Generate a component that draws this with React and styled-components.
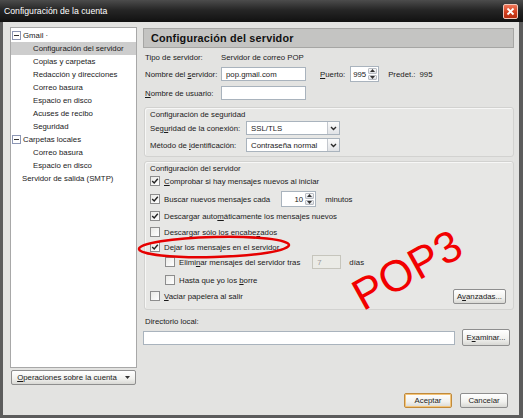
import React from 'react';
import styled, { createGlobalStyle } from 'styled-components';

const GlobalStyle = createGlobalStyle`
  html, body { margin: 0; padding: 0; background: #e3e3e1; }
  body {
    font-family: "Liberation Sans", Arial, sans-serif;
    font-size: 7.8px;
    color: #1a1a1a;
  }
  u { text-decoration: underline; text-underline-offset: 1px; }
`;

const Window = styled.div`
  position: relative;
  width: 523px;
  height: 418px;
  display: flex;
  flex-direction: column;
  overflow: hidden;
`;

const TitleBar = styled.div`
  height: 22px;
  flex: none;
  display: flex;
  align-items: center;
  justify-content: space-between;
  padding: 0 5px 0 4px;
  background: linear-gradient(#4c4c4c, #262626 45%, #111 100%);
  color: #fff;
  font-size: 8.7px;
`;

const CloseButton = styled.div`
  width: 15px;
  height: 15px;
  box-sizing: border-box;
  border: 1px solid #f3c6b8;
  border-radius: 2px;
  background: linear-gradient(#f0775a, #d4401f 55%, #b52c10);
  display: flex;
  align-items: center;
  justify-content: center;
`;

const Frame = styled.div`
  flex: 1;
  display: flex;
  background: #e3e3e1;
  border-left: 3px solid #5c5c5c;
  border-right: 4px solid #5c5c5c;
  border-bottom: 3px solid #5c5c5c;
  padding: 5px 5px 0 7px;
`;

const LeftColumn = styled.div`
  width: 127px;
  flex: none;
  display: flex;
  flex-direction: column;
  gap: 2px;
`;

const Tree = styled.div`
  height: 341px;
  box-sizing: border-box;
  background: #fff;
  border: 1px solid #a8a8a8;
  padding-top: 1px;
`;

const TreeItem = styled.div`
  height: 13px;
  display: flex;
  align-items: center;
  gap: 2px;
  padding-left: ${p => p.$indent}px;
  background: ${p => (p.$selected ? '#cdcdcd' : 'transparent')};
  white-space: nowrap;
`;

const Expander = styled.span`
  width: 7px;
  height: 7px;
  border: 1px solid #8c96b4;
  background: #fff;
  display: flex;
  align-items: center;
  justify-content: center;
  &::after {
    content: '';
    width: 5px;
    height: 1px;
    background: #333;
  }
`;

const Button = styled.div`
  box-sizing: border-box;
  height: ${p => p.$h || 15}px;
  width: ${p => p.$w}px;
  margin-right: ${p => p.$mr || 0}px;
  flex: none;
  display: flex;
  align-items: center;
  justify-content: center;
  gap: 8px;
  border: 1px solid ${p => (p.$default ? '#c08a3c' : '#8e8e8e')};
  border-radius: 2px;
  background: linear-gradient(#ffffff, #f1f1ee 60%, #d8d8d4);
  box-shadow: ${p => (p.$default ? 'inset 0 0 0 1px #f4c477' : 'none')};
  white-space: nowrap;
`;

const SideButton = styled(Button)`
  margin-left: 1px;
`;

const RightColumn = styled.div`
  width: 371px;
  margin-left: 6px;
  display: flex;
  flex-direction: column;
`;

const Header = styled.div`
  height: 20px;
  margin-top: 1px;
  box-sizing: border-box;
  display: flex;
  align-items: center;
  padding-left: 7px;
  background: #c4c4c2;
  border: 1px solid #a6a6a4;
  font-size: 10.8px;
  font-weight: bold;
  letter-spacing: 0.2px;
  color: #111;
`;

const Row = styled.div`
  height: ${p => p.$h}px;
  margin-top: ${p => p.$mt || 0}px;
  flex: none;
  display: flex;
  align-items: center;
  padding-left: ${p => p.$pl || 0}px;
  white-space: nowrap;
`;

const Label = styled.span`
  width: ${p => p.$w}px;
  flex: none;
`;

const Text = styled.span`
  margin-left: ${p => p.$ml || 0}px;
`;

const TextInput = styled.div`
  box-sizing: border-box;
  width: ${p => p.$w}px;
  height: ${p => p.$h || 14}px;
  margin-left: ${p => p.$ml || 0}px;
  flex: none;
  display: flex;
  align-items: center;
  padding: 0 4px;
  background: ${p => (p.$disabled ? '#ebebe6' : '#fff')};
  color: ${p => (p.$disabled ? '#9a9a9a' : 'inherit')};
  border: 1px solid ${p => (p.$disabled ? '#c6c5bc' : '#a9b3bd')};
`;

const SpinBox = styled.div`
  box-sizing: border-box;
  width: ${p => p.$w}px;
  height: 16px;
  margin-left: ${p => p.$ml || 0}px;
  flex: none;
  display: flex;
  background: #fff;
  border: 1px solid #a9b3bd;
`;

const SpinValue = styled.span`
  flex: 1;
  display: flex;
  align-items: center;
  justify-content: flex-end;
  padding-right: 1px;
`;

const SpinArrows = styled.div`
  width: 9px;
  display: flex;
  flex-direction: column;
  gap: 1px;
  padding: 1px;
`;

const SpinArrow = styled.div`
  flex: 1;
  border: 1px solid #b9bdc4;
  border-radius: 1px;
  background: linear-gradient(#fafafa, #dcdfe4);
  display: flex;
  align-items: center;
  justify-content: center;
`;

const Select = styled.div`
  box-sizing: border-box;
  width: 94px;
  height: 14px;
  flex: none;
  display: flex;
  align-items: center;
  justify-content: space-between;
  padding-left: 4px;
  background: #fff;
  border: 1px solid #a9b3bd;
`;

const SelectButton = styled.div`
  width: 12px;
  height: 12px;
  box-sizing: border-box;
  border-left: 1px solid #c4c8ce;
  background: linear-gradient(#fbfbfb, #e1e3e6);
  display: flex;
  align-items: center;
  justify-content: center;
`;

const GroupBox = styled.div`
  height: ${p => p.$h}px;
  margin-top: ${p => p.$mt}px;
  margin-left: 1px;
  flex: none;
  box-sizing: border-box;
  display: flex;
  flex-direction: column;
  padding: 0 7px 0 5px;
  background: #e7e7e5;
  border: 1px solid #d2d2d0;
  border-radius: 3px;
  box-shadow: inset 1px 1px 0 #f7f7f6;
`;

const CheckBox = styled.span`
  width: 10px;
  height: 10px;
  box-sizing: border-box;
  flex: none;
  margin-right: 4px;
  border: 1px solid #8d8d8d;
  background: linear-gradient(135deg, #e9e9e6, #fff);
  display: flex;
  align-items: center;
  justify-content: center;
`;

const Spacer = styled.div`
  flex: 1;
`;

const BottomBar = styled.div`
  display: flex;
  justify-content: flex-end;
  gap: 8px;
  margin: 0 6px 7px 0;
`;

const Overlay = styled.svg`
  position: absolute;
  left: 134px;
  top: 233px;
  pointer-events: none;
`;

const Stamp = styled.div`
  position: absolute;
  left: 407px;
  top: 270px;
  transform: translate(-50%, -50%) rotate(-29deg);
  font-family: "Liberation Sans", Arial, sans-serif;
  font-size: 44px;
  line-height: 1;
  color: #f20000;
  white-space: nowrap;
  pointer-events: none;
`;

const Chevron = () => (
  <svg width="7" height="5" viewBox="0 0 7 5">
    <path d="M1 1 L3.5 3.5 L6 1" fill="none" stroke="#2a2a2a" strokeWidth="1.4" />
  </svg>
);

const Tri = ({ up }) => (
  <svg width="5" height="3" viewBox="0 0 5 3">
    <path d={up ? 'M0 3 L2.5 0 L5 3Z' : 'M0 0 L2.5 3 L5 0Z'} fill="#333" />
  </svg>
);

const Check = ({ checked }) => (
  <CheckBox>
    {checked && (
      <svg width="8" height="8" viewBox="0 0 8 8">
        <path d="M1.2 4 L3.2 6 L6.8 1.8" fill="none" stroke="#222" strokeWidth="1.4" />
      </svg>
    )}
  </CheckBox>
);

const Spin = ({ value, w, ml }) => (
  <SpinBox $w={w} $ml={ml}>
    <SpinValue>{value}</SpinValue>
    <SpinArrows>
      <SpinArrow><Tri up /></SpinArrow>
      <SpinArrow><Tri /></SpinArrow>
    </SpinArrows>
  </SpinBox>
);

const tree = [
  { label: 'Gmail ·', indent: 1, expander: true },
  { label: 'Configuración del servidor', indent: 22, selected: true },
  { label: 'Copias y carpetas', indent: 22 },
  { label: 'Redacción y direcciones', indent: 22 },
  { label: 'Correo basura', indent: 22 },
  { label: 'Espacio en disco', indent: 22 },
  { label: 'Acuses de recibo', indent: 22 },
  { label: 'Seguridad', indent: 22 },
  { label: 'Carpetas locales', indent: 1, expander: true },
  { label: 'Correo basura', indent: 22 },
  { label: 'Espacio en disco', indent: 22 },
  { label: 'Servidor de salida (SMTP)', indent: 11 },
];

export default function App() {
  return (
    <>
      <GlobalStyle />
      <Window>
        <TitleBar>
          <span>Configuración de la cuenta</span>
          <CloseButton>
            <svg width="9" height="9" viewBox="0 0 9 9">
              <path d="M1.5 1.5 L7.5 7.5 M7.5 1.5 L1.5 7.5" stroke="#fff" strokeWidth="1.8" />
            </svg>
          </CloseButton>
        </TitleBar>
        <Frame>
          <LeftColumn>
            <Tree>
              {tree.map((item, i) => (
                <TreeItem key={i} $indent={item.indent} $selected={item.selected}>
                  {item.expander && <Expander />}
                  <span>{item.label}</span>
                </TreeItem>
              ))}
            </Tree>
            <SideButton $w={125}>
              <span><u>O</u>peraciones sobre la cuenta</span>
              <svg width="5" height="3" viewBox="0 0 5 3"><path d="M0 0 L2.5 3 L5 0Z" fill="#333" /></svg>
            </SideButton>
          </LeftColumn>

          <RightColumn>
            <Header>Configuración del servidor</Header>

            <Row $h={12} $mt={3} $pl={2}>
              <Label $w={76}>Tipo de servidor:</Label>
              <span>Servidor de correo POP</span>
            </Row>
            <Row $h={14} $mt={4} $pl={2}>
              <Label $w={76}>Nombre del <u>s</u>ervidor:</Label>
              <TextInput $w={85}>pop.gmail.com</TextInput>
              <Text $ml={14}><u>P</u>uerto:</Text>
              <Spin value="995" w={29} ml={5} />
              <Text $ml={9}>Predet.:</Text>
              <Text $ml={4}>995</Text>
            </Row>
            <Row $h={14} $mt={5} $pl={2}>
              <Label $w={76}><u>N</u>ombre de usuario:</Label>
              <TextInput $w={85} />
            </Row>

            <GroupBox $h={50} $mt={7}>
              <Row $h={12}>Configuración de seguridad</Row>
              <Row $h={14} $mt={1}>
                <Label $w={96}>Seg<u>u</u>ridad de la conexión:</Label>
                <Select>SSL/TLS<SelectButton><Chevron /></SelectButton></Select>
              </Row>
              <Row $h={14} $mt={3}>
                <Label $w={96}>Método de <u>i</u>dentificación:</Label>
                <Select>Contraseña normal<SelectButton><Chevron /></SelectButton></Select>
              </Row>
            </GroupBox>

            <GroupBox $h={149} $mt={4}>
              <Row $h={12}>Configuración del servidor</Row>
              <Row $h={12} $mt={1}>
                <Check checked /><span><u>C</u>omprobar si hay mensajes nuevos al iniciar</span>
              </Row>
              <Row $h={16} $mt={4}>
                <Check checked /><span>Buscar nuevos mensajes cada</span>
                <Spin value="10" w={35} ml={11} />
                <Text $ml={9}>minutos</Text>
              </Row>
              <Row $h={12} $mt={3}>
                <Check checked /><span>Descargar auto<u>m</u>áticamente los mensajes nuevos</span>
              </Row>
              <Row $h={12} $mt={4}>
                <Check /><span>Descargar sólo los encabe<u>z</u>ados</span>
              </Row>
              <Row $h={12} $mt={3}>
                <Check checked /><span>De<u>j</u>ar los mensajes en el servidor.</span>
              </Row>
              <Row $h={14} $mt={2} $pl={15}>
                <Check /><span>Elimi<u>n</u>ar mensajes del servidor tras</span>
                <TextInput $w={29} $ml={12} $disabled>7</TextInput>
                <Text $ml={8}>días</Text>
              </Row>
              <Row $h={12} $mt={5} $pl={15}>
                <Check /><span>Hasta que yo los <u>b</u>orre</span>
              </Row>
              <Row $h={16} $mt={2}>
                <Check /><span><u>V</u>aciar papelera al salir</span>
                <Spacer />
                <Button $w={53}><span>A<u>v</u>anzadas...</span></Button>
              </Row>
            </GroupBox>

            <Row $h={12} $mt={5} $pl={2}>Directorio local:</Row>
            <Row $h={17} $mt={2}>
              <TextInput $w={312} />
              <Spacer />
              <Button $w={48} $h={17} $mr={4}><span>E<u>x</u>aminar...</span></Button>
            </Row>

            <Spacer />
            <BottomBar>
              <Button $w={48} $default><span>Aceptar</span></Button>
              <Button $w={48}><span>Cancelar</span></Button>
            </BottomBar>
          </RightColumn>
        </Frame>

        <Overlay width="160" height="30" viewBox="0 0 160 30">
          <ellipse cx="80" cy="14" rx="75" ry="10" fill="none" stroke="#e60000" strokeWidth="2.6" transform="rotate(-1.5 80 14)" />
        </Overlay>
        <Stamp>POP3</Stamp>
      </Window>
    </>
  );
}
